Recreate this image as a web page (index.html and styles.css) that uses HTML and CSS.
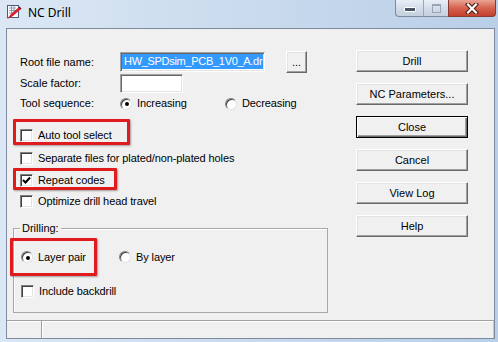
FILE: index.html
```html
<!DOCTYPE html>
<html lang="en">
<head>
    <meta charset="UTF-8">
    <title>NC Drill</title>
    <link rel="stylesheet" href="styles.css">
</head>
<body>
<div class="window">
    <div class="titlebar">
        <svg class="app-icon" width="16" height="16" viewBox="0 0 16 16">
            <rect x="1.5" y="1.5" width="11" height="12" fill="#fff" stroke="#4b5b7c"/>
            <path d="M3 4h7M3 6.5h7M3 9h4M5.5 2v11M8 2v6" stroke="#8c9bb8" stroke-width="1"/>
            <path d="M1 15 L5 10 L13 3 L15 5 L7 12 Z" fill="#d8222c"/>
            <path d="M13 3 L15 5" stroke="#7a1015" stroke-width="1.5"/>
        </svg>
        <span class="title">NC Drill</span>
        <div class="caption">
            <div class="cap cap-min"><span></span></div>
            <div class="cap cap-max"><span></span></div>
            <div class="cap cap-close">
                <svg width="14" height="11" viewBox="0 0 14 11">
                    <path d="M3 1.5 L11 9.5 M11 1.5 L3 9.5" stroke="#4a1a14" stroke-width="4.2" stroke-linecap="square"/>
                    <path d="M3 1.5 L11 9.5 M11 1.5 L3 9.5" stroke="#fff" stroke-width="2.2" stroke-linecap="square"/>
                </svg>
            </div>
        </div>
    </div>

    <div class="client">
        <div class="main">
            <div class="left">
                <div class="row row-root">
                    <span class="label">Root file name:</span>
                    <div class="field field-name"><span class="sel">HW_SPDsim_PCB_1V0_A.dr</span></div>
                    <button class="btn btn-browse">...</button>
                </div>
                <div class="row row-scale">
                    <span class="label">Scale factor:</span>
                    <div class="field field-scale"></div>
                </div>
                <div class="row row-seq">
                    <span class="label">Tool sequence:</span>
                    <span class="opt opt-inc"><span class="radio on"></span>Increasing</span>
                    <span class="opt"><span class="radio"></span>Decreasing</span>
                </div>

                <div class="mark mark-auto">
                    <span class="opt"><span class="check"></span>Auto tool select</span>
                </div>
                <div class="check-row row-sep">
                    <span class="opt"><span class="check"></span>Separate files for plated/non-plated holes</span>
                </div>
                <div class="mark mark-repeat">
                    <span class="opt"><span class="check on">
                        <svg width="9" height="9" viewBox="0 0 9 9"><path d="M1 4 L3.5 6.5 L8 1.5" stroke="#000" stroke-width="2" fill="none"/></svg>
                    </span>Repeat codes</span>
                </div>
                <div class="check-row row-opt">
                    <span class="opt"><span class="check"></span>Optimize drill head travel</span>
                </div>

                <div class="group">
                    <div class="group-title">Drilling:</div>
                    <div class="group-row">
                        <div class="mark mark-layer">
                            <span class="opt"><span class="radio on"></span>Layer pair</span>
                        </div>
                        <span class="opt opt-bylayer"><span class="radio"></span>By layer</span>
                    </div>
                    <div class="check-row row-backdrill">
                        <span class="opt"><span class="check"></span>Include backdrill</span>
                    </div>
                </div>
            </div>

            <div class="right">
                <button class="btn">Drill</button>
                <button class="btn">NC Parameters...</button>
                <button class="btn default">Close</button>
                <button class="btn">Cancel</button>
                <button class="btn">View Log</button>
                <button class="btn">Help</button>
            </div>
        </div>

        <div class="status">
            <div class="pane pane-first"></div>
            <div class="pane"></div>
        </div>
    </div>
</div>
</body>
</html>
```

FILE: styles.css
```css
body {
    margin: 0;
    padding: 0;
    font-family: "Liberation Sans", Arial, sans-serif;
    font-size: 11px;
    color: #000;
    background: #fff;
}
.window {
    width: 498px;
    height: 342px;
    overflow: hidden;
    background: linear-gradient(to right, #dbe7f4, #c6d8ec 60%, #b9cfe8);
}
.titlebar {
    height: 28px;
    display: flex;
    align-items: flex-start;
    padding: 0 2px 0 6px;
    box-sizing: border-box;
}
.app-icon {
    margin-top: 4px;
}
.title {
    margin: 5px 0 0 6px;
    font-family: "Noto Sans", "DejaVu Sans", sans-serif;
    font-size: 12px;
    line-height: 16px;
    color: #000;
}
.caption {
    margin-left: auto;
    display: flex;
}
.cap {
    height: 17px;
    box-sizing: border-box;
    display: flex;
    align-items: center;
    justify-content: center;
    border: 1px solid #7d8a9c;
    border-top: none;
}
.cap-min {
    width: 28px;
    border-right: none;
    border-radius: 0 0 0 4px;
    background: linear-gradient(#e9eff7, #d3dde9 50%, #c4d0de);
}
.cap-min span {
    width: 10px;
    height: 3px;
    background: #4a5566;
    border: 1px solid #fff;
    border-radius: 1px;
    margin-top: 3px;
}
.cap-max {
    width: 25px;
    border-left: 1px solid #9aa6b6;
    border-right: none;
    background: linear-gradient(#e9eff7, #d3dde9 50%, #c4d0de);
}
.cap-max span {
    width: 7px;
    height: 6px;
    border: 1px solid #9aa4b2;
    border-top-width: 2px;
}
.cap-close {
    width: 48px;
    border-color: #8a3a30;
    border-radius: 0 0 4px 0;
    background: linear-gradient(#e9a596, #d6624e 50%, #c4402c);
}
.client {
    margin: 0 3px 0 6px;
    height: 311px;
    box-sizing: border-box;
    border: 1px solid #7d8b9e;
    background: #f0f0f0;
    display: flex;
    flex-direction: column;
}
.main {
    height: 291px;
    display: flex;
}
.left {
    width: 349px;
    box-sizing: border-box;
    padding: 22px 0 0 13px;
}
.right {
    width: 112px;
    padding-top: 21px;
    display: flex;
    flex-direction: column;
    gap: 11px;
}
.row {
    display: flex;
    align-items: center;
}
.label {
    width: 100px;
    line-height: 13px;
}
.row-root {
    height: 22px;
}
.row-scale {
    height: 20px;
}
.row-seq {
    height: 21px;
}
.field {
    box-sizing: border-box;
    background: #fff;
    border: 1px solid;
    border-color: #a0a0a0 #fff #fff #a0a0a0;
    box-shadow: inset 1px 1px #696969, inset -1px -1px #e3e3e3;
    overflow: hidden;
    white-space: nowrap;
}
.field-name {
    width: 145px;
    height: 20px;
    padding: 1px 1px 2px 1px;
}
.field-name .sel {
    display: block;
    height: 100%;
    padding-left: 2px;
    background: #3399ff;
    color: #fff;
    line-height: 15px;
    letter-spacing: -0.3px;
}
.field-scale {
    width: 63px;
    height: 19px;
}
.btn {
    box-sizing: border-box;
    width: 112px;
    height: 22px;
    padding: 0;
    background: #f0f0f0;
    border: 1px solid;
    border-color: #fff #696969 #696969 #fff;
    box-shadow: inset -1px -1px #a0a0a0, inset 1px 1px #e3e3e3;
    font-family: "Liberation Sans", Arial, sans-serif;
    font-size: 11px;
    color: #000;
}
.btn.default {
    border: 1px solid #000;
    box-shadow: inset 1px 1px #fff, inset -1px -1px #696969, inset -2px -2px #a0a0a0;
}
.btn-browse {
    width: 21px;
    margin-left: 21px;
    line-height: 12px;
}
.opt {
    display: flex;
    align-items: center;
    gap: 5px;
    line-height: 13px;
    white-space: nowrap;
    letter-spacing: -0.1px;
}
.opt-inc {
    width: 105px;
}
.radio {
    width: 12px;
    height: 12px;
    box-sizing: border-box;
    border-radius: 50%;
    background: #fff;
    border: 1px solid;
    border-color: #808080 #e3e3e3 #e3e3e3 #808080;
    box-shadow: inset 1px 1px #404040;
    display: flex;
    align-items: center;
    justify-content: center;
}
.radio.on::after {
    content: "";
    width: 4px;
    height: 4px;
    border-radius: 50%;
    background: #000;
    margin: 1px 0 0 1px;
}
.check {
    width: 13px;
    height: 13px;
    box-sizing: border-box;
    background: #fff;
    border: 1px solid;
    border-color: #808080 #fff #fff #808080;
    box-shadow: inset 1px 1px #404040, inset -1px -1px #e3e3e3;
    display: flex;
    align-items: center;
    justify-content: center;
}
.check-row {
    display: flex;
    height: 13px;
}
.mark {
    box-sizing: border-box;
    border: 3px solid #e01b1d;
    border-radius: 1px;
    box-shadow: 1px 1px 2px rgba(0, 0, 0, 0.35);
}
.mark-auto {
    margin: 5px 0 0 -7px;
    width: 117px;
    height: 26px;
    padding: 7px 0 0 4px;
}
.row-sep {
    margin-top: 7px;
}
.mark-repeat {
    margin: 3px 0 0 -7px;
    width: 104px;
    height: 22px;
    padding: 3px 0 0 4px;
}
.row-opt {
    margin-top: 5px;
}
.group {
    margin: 20px 0 0 -7px;
    width: 315px;
    height: 85px;
    box-sizing: border-box;
    border: 1px solid #a8a8a8;
    box-shadow: inset 1px 1px #fff;
}
.group-title {
    width: max-content;
    margin: -7px 0 0 6px;
    padding: 0 2px;
    background: #f0f0f0;
    line-height: 13px;
}
.group-row {
    display: flex;
    align-items: center;
    margin: 3px 0 0 -4px;
    height: 38px;
}
.mark-layer {
    width: 87px;
    height: 38px;
    padding-left: 8px;
    display: flex;
    align-items: center;
}
.opt-bylayer {
    margin-left: 22px;
}
.row-backdrill {
    margin: 9px 0 0 7px;
}
.status {
    height: 18px;
    box-sizing: border-box;
    display: flex;
    border-top: 1px solid #a0a0a0;
    box-shadow: inset 0 1px #fff;
}
.pane {
    flex: 1;
    border-right: 1px solid #c8c8c8;
}
.pane-first {
    flex: none;
    width: 34px;
    border-right: 1px solid #a0a0a0;
    box-shadow: 1px 0 #fff;
}
```
